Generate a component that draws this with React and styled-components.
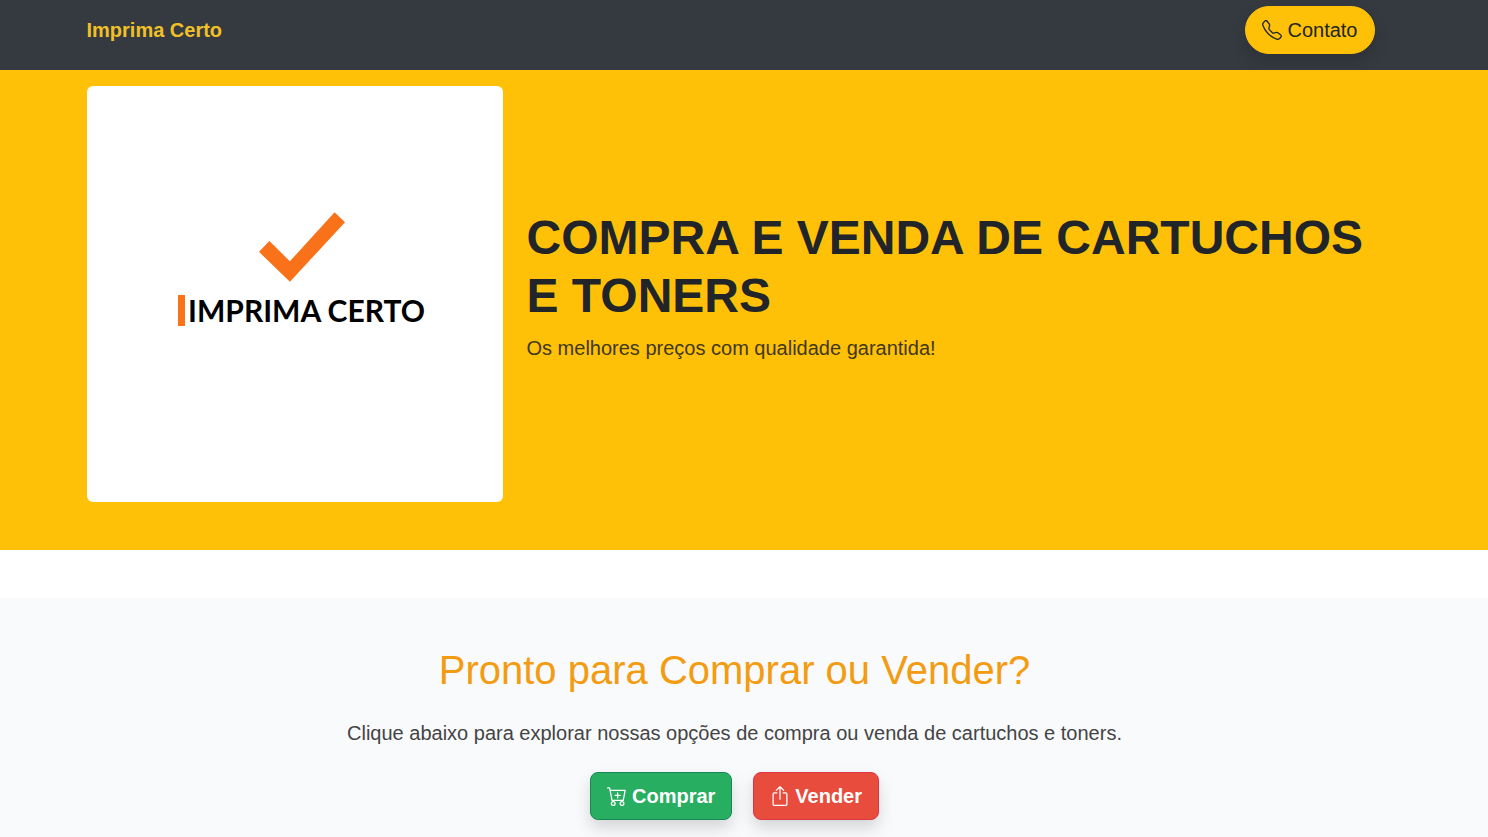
import React from "react";
import styled, { createGlobalStyle } from "styled-components";
import { BsTelephone, BsCartPlus, BsBoxArrowUp } from "react-icons/bs";

const GlobalStyle = createGlobalStyle`
  *, *::before, *::after { box-sizing: border-box; }
  body {
    margin: 0;
    font-family: Arial, "Liberation Sans", sans-serif;
    font-size: 20px;
    line-height: 30px;
    color: #212529;
    background: #fff;
  }
  h1, h2, p { margin: 0; }
`;

const Page = styled.div`
  display: flex;
  flex-direction: column;
  min-height: 100vh;
`;

const Band = styled.div`
  padding-right: 19px;
`;

const Container = styled.div`
  width: 100%;
  max-width: 1320px;
  margin: 0 auto;
  padding: 0 12px;
`;

const Navbar = styled(Band).attrs({ as: "header" })`
  height: 70px;
  padding-top: 6px;
  background: #343a40;
`;

const NavContent = styled(Container)`
  display: flex;
  align-items: center;
  justify-content: space-between;
`;

const Brand = styled.a`
  color: #f1c027;
  font-weight: 700;
  text-decoration: none;
`;

const Button = styled.button`
  display: inline-flex;
  align-items: center;
  gap: 5px;
  height: 48px;
  padding: 8px 16px;
  border: 1px solid ${(p) => p.$border};
  border-radius: ${(p) => (p.$pill ? "24px" : "8px")};
  background: ${(p) => p.$bg};
  color: ${(p) => p.$color || "#fff"};
  font-family: inherit;
  font-size: 20px;
  font-weight: ${(p) => (p.$pill ? 400 : 700)};
  line-height: 30px;
  white-space: nowrap;
  box-shadow: 0 8px 16px rgba(0, 0, 0, 0.15);
  cursor: pointer;
`;

const ContactButton = styled(Button)`
  margin-right: 8px;
`;

const Hero = styled(Band).attrs({ as: "section" })`
  padding-top: 16px;
  padding-bottom: 48px;
  background: #ffc107;
`;

const HeroRow = styled(Container)`
  display: grid;
  grid-template-columns: minmax(0, 416fr) minmax(0, 856fr);
  gap: 24px;
  align-items: center;
`;

const LogoCard = styled.div`
  display: flex;
  flex-direction: column;
  align-items: center;
  aspect-ratio: 1;
  padding: 126px 0 0 14px;
  border-radius: 6px;
  background: #fff;
`;

const LogoText = styled.div`
  display: flex;
  align-items: center;
  gap: 3px;
  margin-top: 13px;
  color: #000;
  font-family: Lato, sans-serif;
  font-size: 30px;
  font-weight: 700;
  line-height: 31px;
  white-space: nowrap;

  &::before {
    content: "";
    width: 7px;
    height: 31px;
    background: #f97419;
  }
`;

const HeroCopy = styled.div`
  padding-bottom: 16px;
`;

const HeroTitle = styled.h1`
  margin-bottom: 8px;
  font-size: 48px;
  font-weight: 700;
  line-height: 58px;
`;

const HeroLead = styled.p`
  color: #41381c;
`;

const Actions = styled(Band).attrs({ as: "section" })`
  flex: 1;
  margin-top: 48px;
  padding-top: 48px;
  padding-bottom: 16px;
  background: #f8fafc;
  text-align: center;
`;

const ActionsTitle = styled.h2`
  margin-bottom: 24px;
  color: #f39c12;
  font-size: 40px;
  font-weight: 400;
  line-height: 48px;
`;

const ActionsText = styled.p`
  margin-bottom: 24px;
  color: #444;
`;

const ButtonRow = styled.div`
  display: flex;
  justify-content: center;
  gap: 21px;
`;

export default function App() {
  return (
    <Page>
      <GlobalStyle />
      <Navbar>
        <NavContent>
          <Brand href="#">Imprima Certo</Brand>
          <ContactButton type="button" $pill $bg="#ffc107" $border="#ffc107" $color="#212529">
            <BsTelephone aria-hidden="true" />
            Contato
          </ContactButton>
        </NavContent>
      </Navbar>
      <main>
        <Hero>
          <HeroRow>
            <LogoCard>
              <svg width="86" height="70" viewBox="0 0 256 207" aria-hidden="true">
                <path d="M0 118 31 86 92 146 225 0 256 30 92 207Z" fill="#f97118" />
              </svg>
              <LogoText>IMPRIMA CERTO</LogoText>
            </LogoCard>
            <HeroCopy>
              <HeroTitle>COMPRA E VENDA DE CARTUCHOS E TONERS</HeroTitle>
              <HeroLead>Os melhores preços com qualidade garantida!</HeroLead>
            </HeroCopy>
          </HeroRow>
        </Hero>
      </main>
      <Actions>
        <Container>
          <ActionsTitle>Pronto para Comprar ou Vender?</ActionsTitle>
          <ActionsText>
            Clique abaixo para explorar nossas opções de compra ou venda de cartuchos e toners.
          </ActionsText>
          <ButtonRow>
            <Button type="button" $bg="#27ae60" $border="#198754">
              <BsCartPlus aria-hidden="true" />
              Comprar
            </Button>
            <Button type="button" $bg="#e74c3c" $border="#dc3545">
              <BsBoxArrowUp aria-hidden="true" />
              Vender
            </Button>
          </ButtonRow>
        </Container>
      </Actions>
    </Page>
  );
}
